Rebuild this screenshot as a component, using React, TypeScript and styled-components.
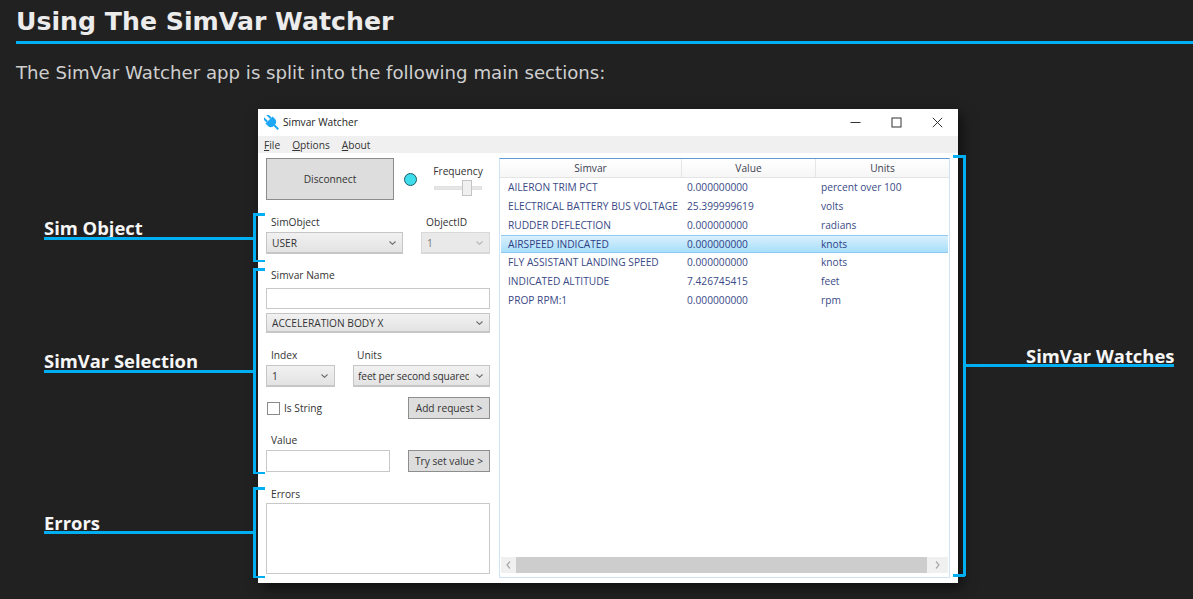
import React from "react";
import styled, { createGlobalStyle } from "styled-components";

const Global = createGlobalStyle`
  html, body { margin: 0; padding: 0; background: #212121; overflow: hidden; }
  #root { width: 1193px; height: 599px; }
`;

const Page = styled.div`
  position: relative;
  width: 1193px;
  height: 599px;
  overflow: hidden;
  background: #212121;
  padding-left: 16px;
  box-sizing: border-box;
  font-family: "DejaVu Sans", sans-serif;
`;
const Title = styled.h1`
  margin: 0;
  height: 41px;
  line-height: 43px;
  box-sizing: content-box;
  font-size: 25.2px;
  font-weight: 700;
  color: #ececec;
  border-bottom: 3px solid #00b0f4;
`;
const Intro = styled.p`
  margin: 17px 0 0;
  line-height: 24px;
  height: 24px;
  font-size: 18.15px;
  color: #cfcfcf;
`;

const Window = styled.div`
  margin: 24px 0 0 242px;
  width: 700px;
  height: 474px;
  background: #fff;
  box-shadow: 4px 5px 12px rgba(0, 0, 0, 0.55);
  font-family: "Open Sans", "Noto Sans", sans-serif;
  font-size: 10.2px;
  color: #333;
  display: flex;
  flex-direction: column;
`;
const TitleBar = styled.div`
  height: 27px;
  display: flex;
  align-items: center;
  padding-left: 6px;
  color: #222;
`;
const TitleText = styled.span`
  flex: 1;
  margin-left: 4px;
  padding-bottom: 1px;
`;
const WinButton = styled.div`
  width: 41px;
  height: 27px;
  display: flex;
  align-items: center;
  justify-content: center;
`;
const Menu = styled.div`
  height: 17px;
  background: #f0f0f0;
  display: flex;
  align-items: center;
  padding-left: 6px;
  gap: 12px;
  color: #333;
  & u { text-underline-offset: 1px; }
`;
const Body = styled.div`
  display: flex;
  padding: 5px 8px 0;
  gap: 9px;
`;
const Left = styled.div`
  width: 224px;
  display: flex;
  flex-direction: column;
`;
const Row = styled.div<{ $mt?: number; $h?: number }>`
  display: flex;
  align-items: center;
  margin-top: ${(p) => p.$mt ?? 0}px;
  ${(p) => (p.$h ? `height: ${p.$h}px;` : "")}
`;
const Disconnect = styled.div`
  width: 128px;
  height: 42px;
  box-sizing: border-box;
  border: 1px solid #8c8c8c;
  background: #dddddd;
  display: flex;
  align-items: center;
  justify-content: center;
  color: #333;
`;
const Led = styled.div`
  width: 13px;
  height: 13px;
  box-sizing: border-box;
  border-radius: 50%;
  border: 1px solid #1c5b66;
  background: #3fdcec;
  margin-left: 10px;
`;
const FreqBox = styled.div`
  margin-left: 17px;
  width: 48px;
  display: flex;
  flex-direction: column;
  align-items: center;
  padding-top: 5px;
  align-self: flex-start;
`;
const FreqLabel = styled.div`
  line-height: 16px;
  height: 16px;
`;
const Slider = styled.div`
  position: relative;
  margin-top: 1px;
  width: 48px;
  height: 16px;
  display: flex;
  align-items: center;
`;
const Track = styled.div`
  width: 100%;
  height: 4px;
  background: #e6e6e6;
  border: 1px solid #e0e0e0;
  box-sizing: border-box;
`;
const Thumb = styled.div`
  position: absolute;
  left: 28px;
  top: 0;
  width: 10px;
  height: 16px;
  box-sizing: border-box;
  background: #f0f0f0;
  border: 1px solid #c4c4c4;
`;
const Label = styled.div<{ $w?: number; $pl?: number }>`
  line-height: 16px;
  height: 16px;
  padding-left: ${(p) => p.$pl ?? 5}px;
  ${(p) => (p.$w ? `width: ${p.$w}px; box-sizing: border-box;` : "")}
  color: #333;
`;
const Select = styled.div<{ $w: number; $h?: number; $ml?: number; $pl?: number; $disabled?: boolean }>`
  width: ${(p) => p.$w}px;
  height: ${(p) => p.$h ?? 22}px;
  margin-left: ${(p) => p.$ml ?? 0}px;
  box-sizing: border-box;
  border: 1px solid ${(p) => (p.$disabled ? "#d9d9d9" : "#c6c6c6")};
  border-bottom-width: 2px;
  background: ${(p) => (p.$disabled ? "#e9e9e9" : "linear-gradient(#f1f1f1, #e3e3e3)")};
  color: ${(p) => (p.$disabled ? "#777" : "#333")};
  display: flex;
  align-items: center;
  padding: 0 6px 0 ${(p) => p.$pl ?? 5}px;
  gap: 7px;
`;
const SelectText = styled.span<{ $tight?: boolean }>`
  flex: 1;
  overflow: hidden;
  white-space: nowrap;
  ${(p) => (p.$tight ? "letter-spacing: -0.12px;" : "")}
`;
const TextBox = styled.div<{ $w: number; $h: number }>`
  width: ${(p) => p.$w}px;
  height: ${(p) => p.$h}px;
  box-sizing: border-box;
  border: 1px solid #c8c8c8;
  background: #fff;
`;
const ActionButton = styled.div`
  width: 82px;
  height: 22px;
  box-sizing: border-box;
  margin-left: auto;
  border: 1px solid #8e8e8e;
  background: #dddddd;
  display: flex;
  align-items: center;
  justify-content: center;
  color: #333;
`;
const Check = styled.div`
  width: 13px;
  height: 13px;
  margin-left: 1px;
  box-sizing: border-box;
  border: 1px solid #8a8a8a;
  background: #fff;
`;
const CheckLabel = styled.span`
  margin-left: 4px;
`;

const List = styled.div`
  width: 451px;
  height: 420px;
  box-sizing: border-box;
  border: 1px solid #cfe3f5;
  border-top-color: #5f9ad3;
  display: flex;
  flex-direction: column;
`;
const Header = styled.div`
  display: grid;
  grid-template-columns: 182px 134px 1fr;
  height: 19px;
  flex: none;
  background: linear-gradient(#fff, #f6f6f6);
  border-bottom: 1px solid #e4e4e4;
  box-sizing: border-box;
`;
const HeaderCell = styled.div`
  text-align: center;
  line-height: 19px;
  border-right: 1px solid #e4e6e8;
  color: #3c4250;
  &:last-child { border-right: 0; }
`;
const Rows = styled.div`
  flex: 1;
`;
const ListRow = styled.div<{ $selected?: boolean }>`
  display: grid;
  grid-template-columns: 182px 134px 1fr;
  height: 18.85px;
  line-height: 18px;
  box-sizing: border-box;
  color: #3a4a86;
  & > div + div { padding-left: 5px; }
  ${(p) =>
    p.$selected
      ? `background: linear-gradient(#d9f0fd, #a8dffa); border-top: 1px solid #8fc8f2; border-bottom: 1px solid #8fc8f2; line-height: 16.85px; margin-left: 1px; margin-right: 1px; color: #2f3f85; grid-template-columns: 181px 134px 1fr;`
      : ""}
`;
const Cell = styled.div<{ $selected?: boolean }>`
  padding-left: ${(p) => (p.$selected ? 7 : 8)}px;
  white-space: nowrap;
  overflow: hidden;
`;
const ScrollBar = styled.div`
  flex: none;
  height: 16px;
  margin: 0 1px 4px;
  display: flex;
  background: #f0f0f0;
`;
const ScrollEnd = styled.div<{ $w: number }>`
  width: ${(p) => p.$w}px;
  display: flex;
  align-items: center;
  justify-content: center;
`;
const ScrollThumb = styled.div`
  width: 411px;
  background: #cdcdcd;
`;

const Line = styled.div<{ $l: number; $t: number; $w: number; $h: number }>`
  position: absolute;
  left: ${(p) => p.$l}px;
  top: ${(p) => p.$t}px;
  width: ${(p) => p.$w}px;
  height: ${(p) => p.$h}px;
  background: #00aef2;
`;
const Callout = styled.div<{ $l: number; $t: number }>`
  position: absolute;
  left: ${(p) => p.$l}px;
  top: ${(p) => p.$t}px;
  font-family: "Open Sans", "Noto Sans", sans-serif;
  font-weight: 700;
  font-size: 18.4px;
  line-height: 24px;
  white-space: nowrap;
  color: #f6f6f6;
`;

const rows = [
  ["AILERON TRIM PCT", "0.000000000", "percent over 100"],
  ["ELECTRICAL BATTERY BUS VOLTAGE", "25.399999619", "volts"],
  ["RUDDER DEFLECTION", "0.000000000", "radians"],
  ["AIRSPEED INDICATED", "0.000000000", "knots"],
  ["FLY ASSISTANT LANDING SPEED", "0.000000000", "knots"],
  ["INDICATED ALTITUDE", "7.426745415", "feet"],
  ["PROP RPM:1", "0.000000000", "rpm"],
];

const Chevron = ({ color = "#6a6a6a" }: { color?: string }) => (
  <svg width="7" height="4" viewBox="0 0 7 4" fill="none">
    <path d="M0.5 0.5 L3.5 3.3 L6.5 0.5" stroke={color} strokeWidth="1.1" />
  </svg>
);

const bracket = (l: number, t: number, b: number) => (
  <>
    <Line $l={l} $t={t} $w={3} $h={b - t} />
    <Line $l={l} $t={t} $w={12} $h={2.5} />
    <Line $l={l} $t={b - 2.5} $w={12} $h={2.5} />
  </>
);

export default function App() {
  return (
    <Page>
      <Global />
      <Title>Using The SimVar Watcher</Title>
      <Intro>The SimVar Watcher app is split into the following main sections:</Intro>
      <Window>
        <TitleBar>
          <svg width="15" height="15" viewBox="0 0 15 15">
            <g transform="rotate(-45 7.5 7.5)" fill="#1ea7f5">
              <rect x="4" y="-1.5" width="2" height="5.5" />
              <rect x="9" y="-1.5" width="2" height="5.5" />
              <path d="M2.5 4 H12.5 V7.5 C12.5 10 10.5 11.5 8.5 11.5 V17 H6.5 V11.5 C4.5 11.5 2.5 10 2.5 7.5 Z" />
            </g>
          </svg>
          <TitleText>Simvar Watcher</TitleText>
          <WinButton>
            <svg width="11" height="11" viewBox="0 0 11 11"><path d="M0.5 5.5 H10.5" stroke="#333" strokeWidth="1" /></svg>
          </WinButton>
          <WinButton>
            <svg width="11" height="11" viewBox="0 0 11 11"><rect x="1" y="1" width="9" height="9" fill="none" stroke="#333" strokeWidth="1" /></svg>
          </WinButton>
          <WinButton>
            <svg width="11" height="11" viewBox="0 0 11 11"><path d="M0.8 0.8 L10.2 10.2 M10.2 0.8 L0.8 10.2" stroke="#333" strokeWidth="1" /></svg>
          </WinButton>
        </TitleBar>
        <Menu>
          <span><u>F</u>ile</span>
          <span><u>O</u>ptions</span>
          <span><u>A</u>bout</span>
        </Menu>
        <Body>
          <Left>
            <Row>
              <Disconnect>Disconnect</Disconnect>
              <Led />
              <FreqBox>
                <FreqLabel>Frequency</FreqLabel>
                <Slider>
                  <Track />
                  <Thumb />
                </Slider>
              </FreqBox>
            </Row>
            <Row $mt={14} $h={16}>
              <Label $w={155}>SimObject</Label>
              <Label>ObjectID</Label>
            </Row>
            <Row $mt={2}>
              <Select $w={137}><SelectText>USER</SelectText><Chevron /></Select>
              <Select $w={69} $ml={18} $disabled><SelectText>1</SelectText><Chevron color="#b4b4b4" /></Select>
            </Row>
            <Row $mt={13}><Label>Simvar Name</Label></Row>
            <Row $mt={5}><TextBox $w={224} $h={21} /></Row>
            <Row $mt={4}>
              <Select $w={224} $h={20}><SelectText>ACCELERATION BODY X</SelectText><Chevron /></Select>
            </Row>
            <Row $mt={14} $h={16}>
              <Label $w={87}>Index</Label>
              <Label $pl={4}>Units</Label>
            </Row>
            <Row $mt={2}>
              <Select $w={69}><SelectText>1</SelectText><Chevron /></Select>
              <Select $w={137} $ml={18} $pl={4}><SelectText $tight>feet per second squared</SelectText><Chevron /></Select>
            </Row>
            <Row $mt={10}>
              <Check />
              <CheckLabel>Is String</CheckLabel>
              <ActionButton>Add request &gt;</ActionButton>
            </Row>
            <Row $mt={13}><Label>Value</Label></Row>
            <Row $mt={2}>
              <TextBox $w={124} $h={22} />
              <ActionButton>Try set value &gt;</ActionButton>
            </Row>
            <Row $mt={14}><Label>Errors</Label></Row>
            <Row $mt={1}><TextBox $w={224} $h={71} /></Row>
          </Left>
          <List>
            <Header>
              <HeaderCell>Simvar</HeaderCell>
              <HeaderCell>Value</HeaderCell>
              <HeaderCell>Units</HeaderCell>
            </Header>
            <Rows>
              {rows.map((r, i) => (
                <ListRow key={r[0]} $selected={i === 3}>
                  {r.map((c) => (
                    <Cell key={c} $selected={i === 3}>{c}</Cell>
                  ))}
                </ListRow>
              ))}
            </Rows>
            <ScrollBar>
              <ScrollEnd $w={15}>
                <svg width="5" height="8" viewBox="0 0 5 8" fill="none"><path d="M4 0.5 L1 4 L4 7.5" stroke="#a8a8a8" strokeWidth="1.2" /></svg>
              </ScrollEnd>
              <ScrollThumb />
              <ScrollEnd $w={21}>
                <svg width="5" height="8" viewBox="0 0 5 8" fill="none"><path d="M1 0.5 L4 4 L1 7.5" stroke="#a8a8a8" strokeWidth="1.2" /></svg>
              </ScrollEnd>
            </ScrollBar>
          </List>
        </Body>
      </Window>

      <Callout $l={44} $t={216}>Sim Object</Callout>
      <Line $l={44} $t={237} $w={209} $h={2.5} />
      {bracket(253, 213, 262)}

      <Callout $l={44} $t={349}>SimVar Selection</Callout>
      <Line $l={44} $t={370} $w={209} $h={2.5} />
      {bracket(253, 268, 474)}

      <Callout $l={44} $t={511}>Errors</Callout>
      <Line $l={44} $t={531} $w={209} $h={2.5} />
      {bracket(253, 487, 578)}

      <Callout $l={1026} $t={344}>SimVar Watches</Callout>
      <Line $l={965} $t={364} $w={209} $h={2.5} />
      <Line $l={963} $t={155} $w={3} $h={421} />
      <Line $l={953} $t={155} $w={12} $h={2.5} />
      <Line $l={953} $t={574} $w={12} $h={2.5} />
    </Page>
  );
}
